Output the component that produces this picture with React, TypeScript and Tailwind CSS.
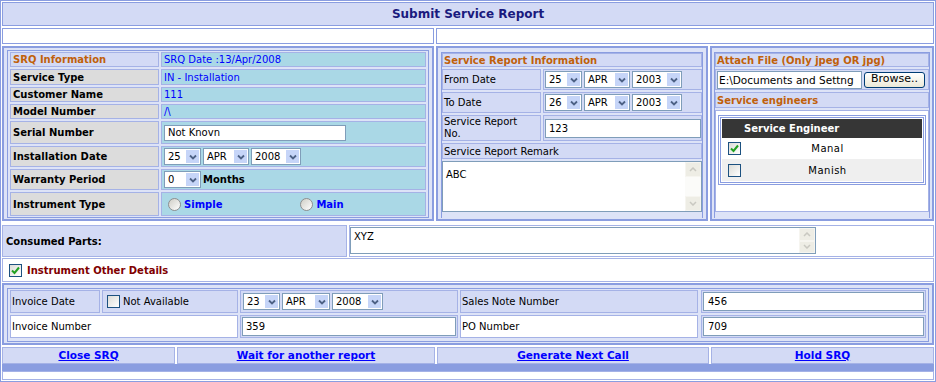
import type { ReactNode } from 'react';

function Sel({ v, w }: { v: string; w: string }) {
  return (
    <div className={`${w} h-[17px] shrink-0 flex items-stretch border border-[#7f9db9] bg-white`}>
      <span className="flex-1 pl-[3px] text-[10px] leading-[15px] text-black">{v}</span>
      <span className="w-[15px] bg-[#c6d5f8] border border-white flex items-center justify-center">
        <svg width="8" height="6" viewBox="0 0 8 6">
          <path d="M1 1.5 L4 4.5 L7 1.5" fill="none" stroke="#4d6185" strokeWidth="1.8" />
        </svg>
      </span>
    </div>
  );
}

function Check({ on }: { on?: boolean }) {
  return (
    <span className="w-[13px] h-[13px] shrink-0 border border-[#1c5180] bg-gradient-to-br from-[#dcdcd7] to-white flex items-center justify-center">
      {on && (
        <svg width="9" height="9" viewBox="0 0 9 9">
          <path d="M1 4.5 L3.5 7 L8 1.5" fill="none" stroke="#21a121" strokeWidth="2" />
        </svg>
      )}
    </span>
  );
}

function Radio() {
  return <span className="block w-[13px] h-[13px] shrink-0 rounded-full border border-[#8e8f8f] bg-gradient-to-br from-[#cfcec6] to-white" />;
}

function ScrollBar() {
  return (
    <div className="w-[16px] shrink-0 flex flex-col justify-between bg-[#fbfbf9]">
      <div className="h-[15px] bg-[#eeede5] border border-[#f6f5f0] flex items-center justify-center">
        <svg width="8" height="5" viewBox="0 0 8 5">
          <path d="M1 4 L4 1 L7 4" fill="none" stroke="#c9c8c1" strokeWidth="1.5" />
        </svg>
      </div>
      <div className="h-[15px] bg-[#eeede5] border border-[#f6f5f0] flex items-center justify-center">
        <svg width="8" height="5" viewBox="0 0 8 5">
          <path d="M1 1 L4 4 L7 1" fill="none" stroke="#c9c8c1" strokeWidth="1.5" />
        </svg>
      </div>
    </div>
  );
}

function LRow({ h, label, children }: { h: string; label: string; children?: ReactNode }) {
  return (
    <div className={`flex gap-[2px] ${h}`}>
      <div className="w-[149px] shrink-0 bg-[#dcdcdc] border border-[#a5b2e6] flex items-center pl-[2px] font-bold text-[10px] text-black">
        {label}
      </div>
      <div className="flex-1 bg-[#aad8e6] border border-[#a5b2e6] flex items-center pl-[2px] text-[#0000ff]">
        {children}
      </div>
    </div>
  );
}

function MRow({ h, label, children }: { h: string; label: ReactNode; children?: ReactNode }) {
  return (
    <div className={`flex gap-[2px] ${h}`}>
      <div className="w-[99px] shrink-0 bg-[#d3daf5] border border-[#a5b2e6] flex items-center pl-[1px] leading-[12px]">
        {label}
      </div>
      <div className="flex-1 bg-[#d3daf5] border border-[#a5b2e6] flex items-center pl-[1px] gap-[2px]">
        {children}
      </div>
    </div>
  );
}

export default function App() {
  return (
    <div className="w-[936px] h-[382px] bg-white border border-[#8a9de0] p-[1px] flex flex-col font-['DejaVu_Sans',sans-serif] text-[10px] text-black overflow-hidden">
      <div className="h-[24px] shrink-0 bg-[#d3daf5] border border-[#8a9de0] flex items-center justify-center text-[12px] font-bold text-[#1a1a7e]">
        Submit Service Report
      </div>

      <div className="mt-[2px] h-[16px] shrink-0 flex gap-[2px]">
        <div className="w-[432px] border border-[#8a9de0] bg-white" />
        <div className="flex-1 border border-[#8a9de0] bg-white" />
      </div>

      <div className="mt-[2px] h-[175px] shrink-0 flex gap-[2px]">
        {/* SRQ information */}
        <div className="w-[432px] border-2 border-[#8a9de0] bg-[#dde3f7] px-[3px] pt-[2px] pb-[1px]">
          <div className="h-full border border-[#8a9de0] px-[2px] pt-[1px] flex flex-col gap-[2px]">
            <div className="flex gap-[2px] h-[15px]">
              <div className="w-[149px] shrink-0 bg-[#d3daf5] border border-[#a5b2e6] flex items-center pl-[2px] font-bold text-[#c0600a]">
                SRQ Information
              </div>
              <div className="flex-1 bg-[#aad8e6] border border-[#a5b2e6] flex items-center pl-[2px] text-[#0000ff]">
                SRQ Date :13/Apr/2008
              </div>
            </div>
            <LRow h="h-[16px]" label="Service Type">IN - Installation</LRow>
            <LRow h="h-[15px]" label="Customer Name">111</LRow>
            <LRow h="h-[15px]" label="Model Number">/\</LRow>
            <LRow h="h-[23px]" label="Serial Number">
              <div className="w-[182px] h-[16px] border border-[#7f9db9] bg-white pl-[3px] text-black leading-[14px]">Not Knovn</div>
            </LRow>
            <LRow h="h-[21px]" label="Installation Date">
              <div className="flex gap-[2px]">
                <Sel v="25" w="w-[37px]" />
                <Sel v="APR" w="w-[46px]" />
                <Sel v="2008" w="w-[50px]" />
              </div>
            </LRow>
            <LRow h="h-[21px]" label="Warranty Period">
              <Sel v="0" w="w-[37px]" />
              <span className="ml-[2px] font-bold text-black">Months</span>
            </LRow>
            <LRow h="h-[24px]" label="Instrument Type">
              <div className="flex items-center pl-[4px]">
                <Radio />
                <span className="ml-[3px] font-bold text-[#0000ff]">Simple</span>
                <span className="ml-[78px]">
                  <Radio />
                </span>
                <span className="ml-[3px] font-bold text-[#0000ff]">Main</span>
              </div>
            </LRow>
          </div>
        </div>

        {/* Service report information */}
        <div className="w-[272px] border-2 border-[#8a9de0] bg-[#dde3f7] px-[3px] pt-[4px] pb-[1px]">
          <div className="h-full border-t border-l border-r border-[#8a9de0] flex flex-col gap-[2px]">
            <div className="h-[14px] bg-[#d3daf5] border border-[#a5b2e6] flex items-center pl-[1px] font-bold text-[#c0600a]">
              Service Report Information
            </div>
            <MRow h="h-[21px]" label="From Date">
              <Sel v="25" w="w-[37px]" />
              <Sel v="APR" w="w-[46px]" />
              <Sel v="2003" w="w-[50px]" />
            </MRow>
            <MRow h="h-[21px]" label="To Date">
              <Sel v="26" w="w-[37px]" />
              <Sel v="APR" w="w-[46px]" />
              <Sel v="2003" w="w-[50px]" />
            </MRow>
            <MRow
              h="h-[26px]"
              label={
                <span>
                  Service Report
                  <br />
                  No.
                </span>
              }
            >
              <div className="flex-1 h-[19px] border border-[#7f9db9] bg-white pl-[3px] leading-[17px]">123</div>
            </MRow>
            <div className="h-[16px] bg-[#d3daf5] border border-[#a5b2e6] flex items-center pl-[1px]">Service Report Remark</div>
            <div className="h-[51px] flex border border-[#7f9db9] bg-white">
              <div className="flex-1 pl-[3px] pt-[5px]">ABC</div>
              <ScrollBar />
            </div>
          </div>
        </div>

        {/* Attach file / engineers */}
        <div className="flex-1 border-2 border-[#8a9de0] bg-[#dde3f7] px-[2px] pt-[4px] pb-[1px]">
          <div className="h-full border-t border-l border-r border-[#8a9de0] flex flex-col gap-[2px]">
            <div className="h-[14px] bg-[#d3daf5] border border-[#a5b2e6] flex items-center pl-[1px] font-bold text-[#c0600a]">
              Attach File (Only jpeg OR jpg)
            </div>
            <div className="h-[21px] bg-[#d3daf5] border border-[#a5b2e6] flex items-center pl-[1px] gap-[2px]">
              <div className="w-[145px] h-[18px] border border-[#7f9db9] bg-white overflow-hidden whitespace-nowrap pl-[1px] text-[10.5px] leading-[16px]">
                E:\Documents and Settng
              </div>
              <div className="w-[61px] h-[16px] rounded-[3px] border border-[#003c74] bg-gradient-to-b from-white to-[#ece9d8] flex items-center justify-center text-[11px]">
                Browse..
              </div>
            </div>
            <div className="h-[16px] bg-[#d3daf5] border border-[#a5b2e6] flex items-center pl-[1px] font-bold text-[#c0600a]">
              Service engineers
            </div>
            <div className="h-[102px] bg-white border border-[#a5b2e6] px-[2px] pt-[4px]">
              <div className="border-[3px] border-double border-[#8a9de0] p-[1px]">
                <div className="h-[19px] bg-[#363636] flex items-center pl-[22px] font-bold text-white">Service Engineer</div>
                <div className="h-[21px] bg-white flex items-center pl-[6px]">
                  <Check on />
                  <span className="flex-1 text-center tracking-[0.5px] pr-[8px]">Manal</span>
                </div>
                <div className="h-[22px] bg-[#efefef] flex items-center pl-[6px]">
                  <Check />
                  <span className="flex-1 text-center tracking-[0.5px] pr-[8px]">Manish</span>
                </div>
              </div>
            </div>
          </div>
        </div>
      </div>

      {/* Consumed parts */}
      <div className="mt-[4px] h-[32px] shrink-0 flex gap-[2px]">
        <div className="w-[345px] bg-[#d3daf5] border border-[#a5b2e6] flex items-center pl-[3px] font-bold">Consumed Parts:</div>
        <div className="flex-1 bg-white border border-[#a5b2e6]">
          <div className="mt-[1px] w-[466px] h-[27px] flex border border-[#7f9db9] bg-white">
            <div className="flex-1 pl-[3px] pt-[1px]">XYZ</div>
            <ScrollBar />
          </div>
        </div>
      </div>

      {/* Instrument other details */}
      <div className="mt-[1px] h-[24px] shrink-0 bg-white border border-[#a5b2e6] flex items-center pl-[6px] gap-[5px]">
        <Check on />
        <span className="font-bold text-[#800000]">Instrument Other Details</span>
      </div>

      {/* Invoice */}
      <div className="mt-[1px] h-[62px] shrink-0 border-2 border-[#8a9de0] bg-[#dde3f7] px-[3px] pt-[3px] pb-[1px]">
        <div className="h-full border border-[#8a9de0] px-[2px] pt-[1px] flex flex-col gap-[2px]">
          <div className="h-[23px] flex gap-[2px]">
            <div className="w-[90px] bg-[#d3daf5] border border-[#a5b2e6] flex items-center pl-[1px]">Invoice Date</div>
            <div className="w-[136px] bg-[#d3daf5] border border-[#a5b2e6] flex items-center pl-[4px] gap-[3px]">
              <Check />
              <span>Not Available</span>
            </div>
            <div className="w-[218px] bg-[#d3daf5] border border-[#a5b2e6] flex items-center pl-[2px] gap-[2px]">
              <Sel v="23" w="w-[37px]" />
              <Sel v="APR" w="w-[48px]" />
              <Sel v="2008" w="w-[51px]" />
            </div>
            <div className="w-[238px] bg-[#d3daf5] border border-[#a5b2e6] flex items-center pl-[1px]">Sales Note Number</div>
            <div className="flex-1 ml-[1px] bg-[#d3daf5] border border-[#a5b2e6] p-[1px]">
              <div className="h-full border border-[#7f9db9] bg-white flex items-center pl-[4px]">456</div>
            </div>
          </div>
          <div className="h-[23px] flex gap-[2px]">
            <div className="w-[228px] bg-white border border-[#a5b2e6] flex items-center pl-[1px]">Invoice Number</div>
            <div className="w-[218px] bg-[#d3daf5] border border-[#a5b2e6] p-[1px]">
              <div className="h-full border border-[#7f9db9] bg-white flex items-center pl-[3px]">359</div>
            </div>
            <div className="w-[238px] bg-white border border-[#a5b2e6] flex items-center pl-[1px]">PO Number</div>
            <div className="flex-1 ml-[1px] bg-[#d3daf5] border border-[#a5b2e6] p-[1px]">
              <div className="h-full border border-[#7f9db9] bg-white flex items-center pl-[4px]">709</div>
            </div>
          </div>
        </div>
      </div>

      {/* Actions */}
      <div className="mt-[2px] h-[17px] shrink-0 flex gap-[2px] font-bold text-[10.5px] text-[#0000ff]">
        <div className="w-[173px] bg-[#d3daf5] border border-[#a5b2e6] flex items-center justify-center">
          <a className="underline">Close SRQ</a>
        </div>
        <div className="w-[258px] bg-[#d3daf5] border border-[#a5b2e6] flex items-center justify-center">
          <a className="underline">Wait for another report</a>
        </div>
        <div className="w-[272px] bg-[#d3daf5] border border-[#a5b2e6] flex items-center justify-center">
          <a className="underline">Generate Next Call</a>
        </div>
        <div className="flex-1 bg-[#d3daf5] border border-[#a5b2e6] flex items-center justify-center">
          <a className="underline">Hold SRQ</a>
        </div>
      </div>

      <div className="h-[7px] shrink-0 bg-[#8a9de0]" />
      <div className="h-[9px] shrink-0 bg-white border border-[#a5b2e6]" />
    </div>
  );
}
